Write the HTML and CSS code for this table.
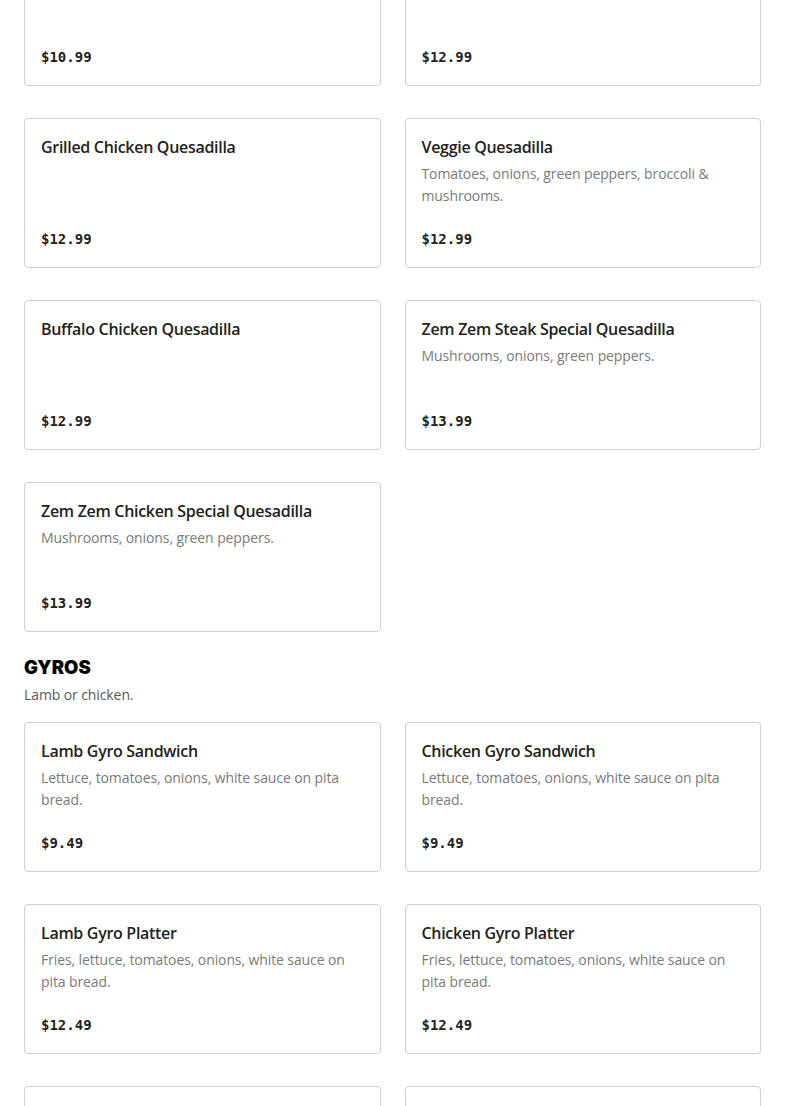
FILE: index.html
```html
<!DOCTYPE html>
<html>
<head>
<meta charset="utf-8">
<link rel="stylesheet" href="styles.css">
</head>
<body>
<main class="menu">
  <section class="grid first">
    <div class="card"><div class="title">&nbsp;</div><div class="price">$10.99</div></div>
    <div class="card"><div class="title">&nbsp;</div><div class="price">$12.99</div></div>
    <div class="card"><div class="title">Grilled Chicken Quesadilla</div><div class="price">$12.99</div></div>
    <div class="card"><div class="title">Veggie Quesadilla</div><div class="desc">Tomatoes, onions, green peppers, broccoli &amp; mushrooms.</div><div class="price">$12.99</div></div>
    <div class="card"><div class="title">Buffalo Chicken Quesadilla</div><div class="price">$12.99</div></div>
    <div class="card"><div class="title">Zem Zem Steak Special Quesadilla</div><div class="desc">Mushrooms, onions, green peppers.</div><div class="price">$13.99</div></div>
    <div class="card"><div class="title">Zem Zem Chicken Special Quesadilla</div><div class="desc">Mushrooms, onions, green peppers.</div><div class="price">$13.99</div></div>
  </section>
  <section class="category">
    <h2 class="cat-title">GYROS</h2>
    <p class="cat-desc">Lamb or chicken.</p>
    <div class="grid">
      <div class="card"><div class="title">Lamb Gyro Sandwich</div><div class="desc">Lettuce, tomatoes, onions, white sauce on pita bread.</div><div class="price">$9.49</div></div>
      <div class="card"><div class="title">Chicken Gyro Sandwich</div><div class="desc">Lettuce, tomatoes, onions, white sauce on pita bread.</div><div class="price">$9.49</div></div>
      <div class="card"><div class="title">Lamb Gyro Platter</div><div class="desc">Fries, lettuce, tomatoes, onions, white sauce on pita bread.</div><div class="price">$12.49</div></div>
      <div class="card"><div class="title">Chicken Gyro Platter</div><div class="desc">Fries, lettuce, tomatoes, onions, white sauce on pita bread.</div><div class="price">$12.49</div></div>
      <div class="card"><div class="title">&nbsp;</div><div class="price">&nbsp;</div></div>
      <div class="card"><div class="title">&nbsp;</div><div class="price">&nbsp;</div></div>
    </div>
  </section>
</main>
</body>
</html>
```
FILE: styles.css
```css
html, body {
  margin: 0;
  padding: 0;
  background: #fff;
  overflow: hidden;
}
body {
  font-family: "Liberation Sans", Arial, sans-serif;
  color: #191919;
}
.menu {
  padding: 0 24px;
  margin-top: -64px;
}
.grid {
  display: grid;
  grid-template-columns: 1fr 1fr;
  column-gap: 24px;
  row-gap: 32px;
}
.card {
  box-sizing: border-box;
  height: 150px;
  border: 1px solid #cfcfcf;
  border-radius: 4px;
  padding: 16px;
  display: flex;
  flex-direction: column;
}
.title {
  font-size: 16px;
  line-height: 24px;
  font-weight: 600;
  letter-spacing: -0.3px;
  color: #222;
  font-family: "Open Sans", "Liberation Sans", sans-serif;
}
.desc {
  margin-top: 4px;
  font-size: 14px;
  line-height: 22px;
  letter-spacing: -0.1px;
  color: #7a7a7a;
  font-family: "Open Sans", "Liberation Sans", sans-serif;
}
.price {
  margin-top: auto;
  font-family: "DejaVu Sans Mono", "Liberation Mono", monospace;
  font-size: 14px;
  line-height: 23px;
  font-weight: 700;
  color: #222;
}
.category {
  margin-top: 24px;
}
.cat-title {
  margin: 0;
  font-family: Inter, "DejaVu Sans", sans-serif;
  font-weight: 900;
  font-size: 18.5px;
  line-height: 22px;
  color: #000;
}
.cat-desc {
  margin: 6px 0 16px;
  font-family: "Open Sans", "Liberation Sans", sans-serif;
  font-size: 14px;
  line-height: 22px;
  letter-spacing: -0.1px;
  color: #595959;
}
```
